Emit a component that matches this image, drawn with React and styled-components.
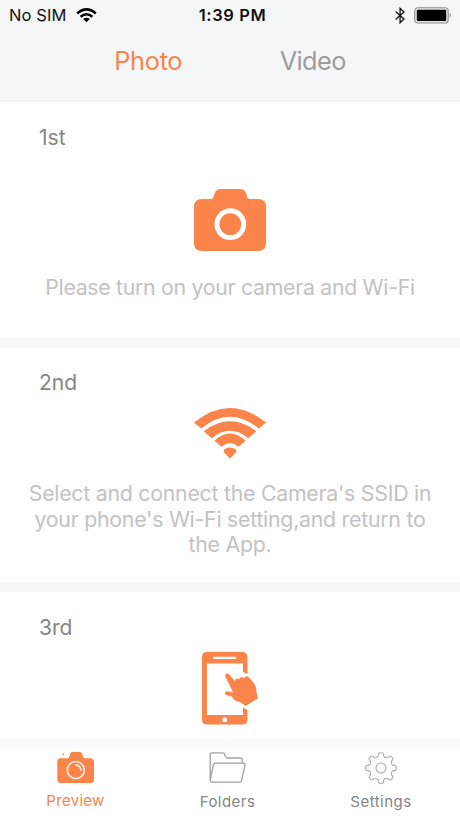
import React from "react";
import styled, { createGlobalStyle } from "styled-components";

const ORANGE = "#fa8449";

const GlobalStyle = createGlobalStyle`
  * { box-sizing: border-box; }
  body { margin: 0; background: #fefefe; font-family: Inter, "Liberation Sans", sans-serif; }
  svg { display: block; flex: none; }
`;

const Screen = styled.div`
  width: 460px;
  height: 818px;
  overflow: hidden;
  display: flex;
  flex-direction: column;
  background: #f7f7f7;
`;

const Header = styled.header`
  flex: none;
  height: 102px;
  background: #f5f6f8;
`;

const StatusBar = styled.div`
  height: 30px;
  display: grid;
  grid-template-columns: 1fr auto 1fr;
  align-items: center;
  padding: 0 8px 0 9px;
  color: #111;
  font-size: 16.5px;
  line-height: 30px;
`;

const StatusGroup = styled.div`
  display: flex;
  align-items: center;
  justify-content: ${(p) => (p.$end ? "flex-end" : "flex-start")};
  gap: 9px;
`;

const Carrier = styled.span`
  letter-spacing: 0.1px;
`;

const Clock = styled.span`
  font-weight: 600;
  letter-spacing: 0.6px;
  padding-left: 4px;
`;

const ModeTabs = styled.nav`
  display: flex;
  justify-content: center;
  gap: 97.5px;
  padding-top: 15px;
`;

const ModeTab = styled.span`
  font-size: 25.3px;
  line-height: 32px;
  letter-spacing: ${(p) => p.$spacing};
  color: ${(p) => (p.$active ? ORANGE : "#9c9c9e")};
`;

const Steps = styled.main`
  flex: 1;
  min-height: 0;
  overflow: hidden;
  display: flex;
  flex-direction: column;
  gap: 10px;
`;

const Step = styled.section`
  flex: none;
  height: ${(p) => p.$height}px;
  display: flex;
  flex-direction: column;
  align-items: center;
  padding-top: ${(p) => p.$top}px;
  background: #fefefe;
`;

const StepTitle = styled.h2`
  align-self: flex-start;
  margin: 0 0 ${(p) => p.$gap}px 39px;
  font-size: 21px;
  font-weight: 400;
  line-height: 26px;
  color: #858585;
`;

const StepText = styled.p`
  margin: ${(p) => p.$gap}px 0 0;
  font-size: 21.3px;
  line-height: 25.5px;
  letter-spacing: ${(p) => p.$spacing};
  text-align: center;
  white-space: pre-line;
  color: #c4c2c2;
`;

const TabBar = styled.nav`
  flex: none;
  height: 80px;
  display: flex;
  padding-top: 14px;
  background: linear-gradient(#fcfcfc, #fafafa 8px, #fefefe 12px);
`;

const Tab = styled.div`
  width: ${(p) => p.$width}px;
  display: flex;
  flex-direction: column;
  align-items: center;
  gap: ${(p) => p.$gap}px;
  font-size: 15px;
  line-height: 20px;
  letter-spacing: ${(p) => p.$spacing};
  color: ${(p) => (p.$active ? ORANGE : "#858585")};
`;

const StatusWifi = () => (
  <svg width="21" height="15" viewBox="0 0 21 15" fill="none" stroke="#000" strokeWidth="2.5">
    <path d="M1.2 5.5Q10.5-2.7 19.8 5.5M4.6 8.8Q10.5 3.6 16.4 8.8" />
    <path d="M7.2 11.1Q10.5 8.5 13.8 11.1L10.5 14.3Z" fill="#000" stroke="none" />
  </svg>
);

const Bluetooth = () => (
  <svg width="10" height="17" viewBox="0 0 10 17" fill="none" stroke="#111" strokeWidth="1.3">
    <path d="M.6 4.6L9 12.1 5.1 15.7V1.3L9 4.9.6 12.4" />
  </svg>
);

const Battery = () => (
  <svg width="38" height="17" viewBox="0 0 38 17">
    <rect x=".7" y=".7" width="33.5" height="15.3" rx="3.2" fill="#e2e2e3" stroke="#909092" strokeWidth="1.1" />
    <rect x="2.8" y="2.8" width="29.4" height="11.2" rx="1.2" />
    <path d="M35.7 5.6Q38 8.3 35.7 11Z" fill="#909092" />
  </svg>
);

const CameraIcon = () => (
  <svg width="72" height="62" viewBox="0 0 72 62">
    <path fill={ORANGE} d="M8 10H17Q18.8 10 19.5 8L20.4 5Q22 0 27 0H46Q51 0 52.3 5L53.1 8Q53.7 10 55.5 10H64Q72 10 72 18V54Q72 62 64 62H8Q0 62 0 54V18Q0 10 8 10Z" />
    <circle cx="36.3" cy="35.2" r="13.4" fill="none" stroke="#fefefe" strokeWidth="5" />
  </svg>
);

const WifiIcon = () => (
  <svg width="72" height="51" viewBox="0 0 72 51" fill={ORANGE}>
    <path d="M0 14.5Q36-14.5 72 14.5L64.8 20.4Q36-3 7.2 20.4Z" />
    <path d="M9.7 23.3Q36 3.4 62.3 23.3L54.3 30.3Q36 15.4 17.7 30.3Z" />
    <path d="M20.5 32.7Q36 18.3 51.5 32.7L44.5 38.7Q36 31.5 27.5 38.7Z" />
    <path d="M30 41.4Q36 37.5 42 41.4L42.3 44.1 36 50.5 29.7 44.1Z" />
  </svg>
);

const PhoneIcon = () => (
  <svg width="56" height="73" viewBox="0 0 56 73">
    <path fill={ORANGE} fillRule="evenodd" d="M5 0H40Q45.5 0 45.5 5.5V22L41 20V11.5H5V63H41V55.5L45.5 58V67.5Q45.5 72.5 40 72.5H5Q0 72.5 0 67.5V5Q0 0 5 0ZM12.5 4.7Q11.2 4.7 11.2 5.9T12.5 7.1H33Q34.3 7.1 34.3 5.9T33 4.7Z" />
    <circle cx="22.7" cy="67.8" r="2.5" fill="#fefefe" />
    <path fill={ORANGE} d="M23.4 24.8C22.2 22.3 25.4 20.3 27.2 22.5L32.8 29Q33.8 25.4 37.2 27.2Q39.2 23.4 42.3 25.9Q44.5 22.7 47 25.6Q53 31.8 54 35.5Q54.3 40.5 56 46.3L43.5 54Q39 49.8 35.2 49.2Q31.8 48.6 29.8 44.5L24.4 43.1C22.2 42.2 22.8 39.4 25.2 39.2L31.2 40.5Z" />
  </svg>
);

const PreviewIcon = () => (
  <svg width="37" height="31" viewBox="0 0 37 31">
    <path fill={ORANGE} d="M3.5 6.2H11Q12 6.2 12.5 4L13.3 1.6Q13.8 0 15.2 0H23Q24.5 0 25 1.6L25.8 4Q26.3 6.2 27.5 6.2H33Q37 6.2 37 10V27Q37 31 33 31H4Q.3 31 .3 27V10Q.3 6.2 3.5 6.2ZM5.4 1.5H7.2V3H5.4Z" />
    <g fill="none" stroke="#fff3ea" strokeLinecap="round">
      <circle cx="18.8" cy="18" r="8.5" strokeWidth="1.6" />
      <path d="M18.8 12.8Q23.4 13.2 23.9 17.8" strokeWidth="1.7" />
    </g>
  </svg>
);

const FolderIcon = () => (
  <svg width="37" height="31" viewBox="0 0 37 31" fill="none" stroke="#a0a0a0" strokeWidth="1.3" strokeLinejoin="round">
    <path d="M1.2 28V3Q1.2.9 3.2.9H13.5Q15.3.9 15.9 2.7L16.5 4.6Q17 6 18.8 6H31Q33.2 6 33.2 8V11M1.2 28Q1.3 30.2 3.3 30.2H30.4Q32.3 30.2 32.7 28.4L36 13.2Q36.4 11.2 34.3 11.2H6.5Q4.8 11.2 4.4 12.9Z" />
  </svg>
);

const gearOutline = () => {
  const point = (radius, degrees) => {
    const a = (degrees * Math.PI) / 180;
    return `${(16 + radius * Math.sin(a)).toFixed(2)} ${(16 - radius * Math.cos(a)).toFixed(2)}`;
  };
  const teeth = Array.from({ length: 8 }, (_, i) => {
    const a = i * 45;
    return `${i ? "L" : "M"}${point(12.5, a - 12)}L${point(14.2, a - 10)}Q${point(15.3, a - 8)} ${point(15.3, a - 4)}L${point(15.3, a + 4)}Q${point(15.3, a + 8)} ${point(14.2, a + 10)}L${point(12.5, a + 12)}Q${point(10.5, a + 22.5)} ${point(12.5, a + 33)}`;
  });
  return `${teeth.join("")}Z`;
};

const GearIcon = () => (
  <svg width="32" height="32" viewBox="0 0 32 32" fill="none" stroke="#ababab" strokeWidth="1.1" strokeLinejoin="round">
    <path d={gearOutline()} />
    <circle cx="16" cy="16" r="5" />
  </svg>
);

export default function App() {
  return (
    <Screen>
      <GlobalStyle />
      <Header>
        <StatusBar>
          <StatusGroup>
            <Carrier>No SIM</Carrier>
            <StatusWifi />
          </StatusGroup>
          <Clock>1:39 PM</Clock>
          <StatusGroup $end>
            <Bluetooth />
            <Battery />
          </StatusGroup>
        </StatusBar>
        <ModeTabs>
          <ModeTab $active $spacing="-0.3px">Photo</ModeTab>
          <ModeTab $spacing="-0.6px">Video</ModeTab>
        </ModeTabs>
      </Header>
      <Steps>
        <Step $height={236} $top={23}>
          <StepTitle $gap={38}>1st</StepTitle>
          <CameraIcon />
          <StepText $gap={24} $spacing="-0.3px">Please turn on your camera and Wi-Fi</StepText>
        </Step>
        <Step $height={234} $top={22}>
          <StepTitle $gap={12}>2nd</StepTitle>
          <WifiIcon />
          <StepText $gap={22} $spacing="-0.25px">
            {"Select and connect the Camera's SSID in\nyour phone's Wi-Fi setting,and return to\nthe App."}
          </StepText>
        </Step>
        <Step $height={146} $top={23}>
          <StepTitle $gap={11}>3rd</StepTitle>
          <PhoneIcon />
        </Step>
      </Steps>
      <TabBar>
        <Tab $active $width={151} $gap={8} $spacing="0.3px">
          <PreviewIcon />
          Preview
        </Tab>
        <Tab $width={153} $gap={9} $spacing="0.45px">
          <FolderIcon />
          Folders
        </Tab>
        <Tab $width={154} $gap={8} $spacing="0.5px">
          <GearIcon />
          Settings
        </Tab>
      </TabBar>
    </Screen>
  );
}
